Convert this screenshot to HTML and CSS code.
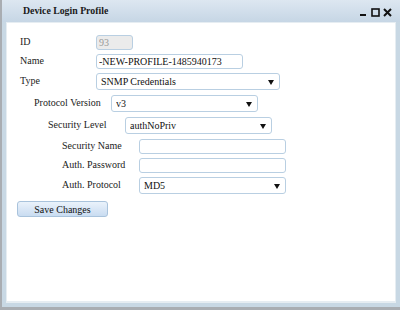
FILE: index.html
```html
<!DOCTYPE html>
<html>

<head>
    <meta charset="UTF-8">
    <title>Device Login Profile</title>
    <link rel="stylesheet" href="styles.css">
</head>

<body>
    <div class="window">
        <div class="titlebar">
            <span class="title">Device Login Profile</span>
            <div class="win-buttons">
                <svg width="9" height="9" viewBox="0 0 9 9"><rect x="1" y="6" width="6" height="2" fill="#111"/></svg>
                <svg width="9" height="9" viewBox="0 0 9 9"><rect x="1" y="1" width="7" height="7" fill="none" stroke="#111" stroke-width="1.6"/></svg>
                <svg width="9" height="9" viewBox="0 0 9 9"><path d="M1 1 L8 8 M8 1 L1 8" stroke="#111" stroke-width="2"/></svg>
            </div>
        </div>
        <div class="content">
            <form class="profile">
                <div class="row row-id">
                    <label>ID</label>
                    <input class="field field-id" type="text" value="93" disabled>
                </div>
                <div class="row row-name">
                    <label>Name</label>
                    <input class="field field-name" type="text" value="-NEW-PROFILE-1485940173">
                </div>
                <div class="row row-type">
                    <label>Type</label>
                    <div class="select select-type">
                        <select><option>SNMP Credentials</option></select>
                    </div>
                </div>
                <div class="group">
                    <div class="row row-pv">
                        <label>Protocol Version</label>
                        <div class="select">
                            <select><option>v3</option></select>
                        </div>
                    </div>
                    <div class="group">
                        <div class="row row-sl">
                            <label>Security Level</label>
                            <div class="select">
                                <select><option>authNoPriv</option></select>
                            </div>
                        </div>
                        <div class="group">
                            <div class="row row-sn">
                                <label>Security Name</label>
                                <input class="field" type="text">
                            </div>
                            <div class="row row-ap">
                                <label>Auth. Password</label>
                                <input class="field" type="password">
                            </div>
                            <div class="row row-aprot">
                                <label>Auth. Protocol</label>
                                <div class="select">
                                    <select><option>MD5</option></select>
                                </div>
                            </div>
                        </div>
                    </div>
                </div>
                <button type="button" class="save">Save Changes</button>
            </form>
        </div>
    </div>
</body>

</html>
```

FILE: styles.css
```css
body {
    margin: 0;
    background-color: #a9adb2;
    font-family: "Liberation Serif", "Times New Roman", serif;
    font-size: 10px;
    color: #222;
}

.window {
    margin-left: 2px;
    width: 398px;
    height: 307px;
    box-sizing: border-box;
    padding: 0 4px 4px 4px;
    background-color: #c8d8e4;
    display: flex;
    flex-direction: column;
}

.titlebar {
    height: 22px;
    flex: none;
    display: flex;
    align-items: center;
    justify-content: space-between;
    background: linear-gradient(#dde7f1, #c6d6e5);
    margin: 0 -4px;
    padding: 0 8px 0 21px;
}

.title {
    font-weight: bold;
    font-size: 9.8px;
    color: #1a1a1a;
    padding-bottom: 1px;
}

.win-buttons {
    display: flex;
    gap: 3px;
    padding-top: 3px;
}

.content {
    flex: 1;
    background-color: #fff;
    border: 1px solid #e6edf2;
    border-bottom-width: 2px;
}

.profile {
    padding: 12px 0 0 13px;
}

.row {
    display: flex;
    align-items: center;
}

.row label {
    width: 76px;
    flex: none;
    margin-top: -2px;
}

.group {
    margin-left: 14px;
}

.field {
    box-sizing: border-box;
    height: 15px;
    width: 147px;
    border: 1px solid #b9cfe2;
    border-radius: 3px;
    padding: 0 2px;
    font-family: inherit;
    font-size: 10px;
    color: #111;
    background-color: #fff;
    outline: none;
}

.field-id {
    width: 37px;
    height: 15px;
    background-color: #ebebeb;
    color: #999;
}

.select {
    position: relative;
    width: 147px;
    height: 17px;
}

.select-type {
    width: 184px;
}

.select select {
    appearance: none;
    -webkit-appearance: none;
    box-sizing: border-box;
    width: 100%;
    height: 100%;
    border: 1px solid #b9cfe2;
    border-radius: 3px;
    background-color: #fff;
    padding: 0 4px;
    font-family: inherit;
    font-size: 10px;
    color: #111;
    outline: none;
}

.select::after {
    content: "";
    position: absolute;
    right: 6px;
    top: 7px;
    border-left: 3px solid transparent;
    border-right: 3px solid transparent;
    border-top: 5px solid #111;
    pointer-events: none;
}

.row-id { height: 15px; margin-bottom: 4px; }
.row-name { height: 15px; margin-bottom: 4px; }
.row-type { height: 17px; margin-bottom: 5px; }
.row-pv { height: 17px; margin-bottom: 5px; }
.row-sl { height: 17px; margin-bottom: 5px; }
.row-sn { height: 15px; margin-bottom: 4px; }
.row-ap { height: 15px; margin-bottom: 4px; }
.row-aprot { height: 17px; margin-bottom: 7px; }

.row-pv label, .row-sl label, .row-sn label, .row-ap label, .row-aprot label {
    width: 77px;
}

.save {
    margin-left: -3px;
    width: 91px;
    height: 16px;
    padding: 0;
    border: 1px solid #a9c3dc;
    border-radius: 3px;
    background: linear-gradient(#eaf2fb, #c9dcf1);
    font-family: inherit;
    font-size: 10px;
    color: #111;
    cursor: pointer;
}
```
